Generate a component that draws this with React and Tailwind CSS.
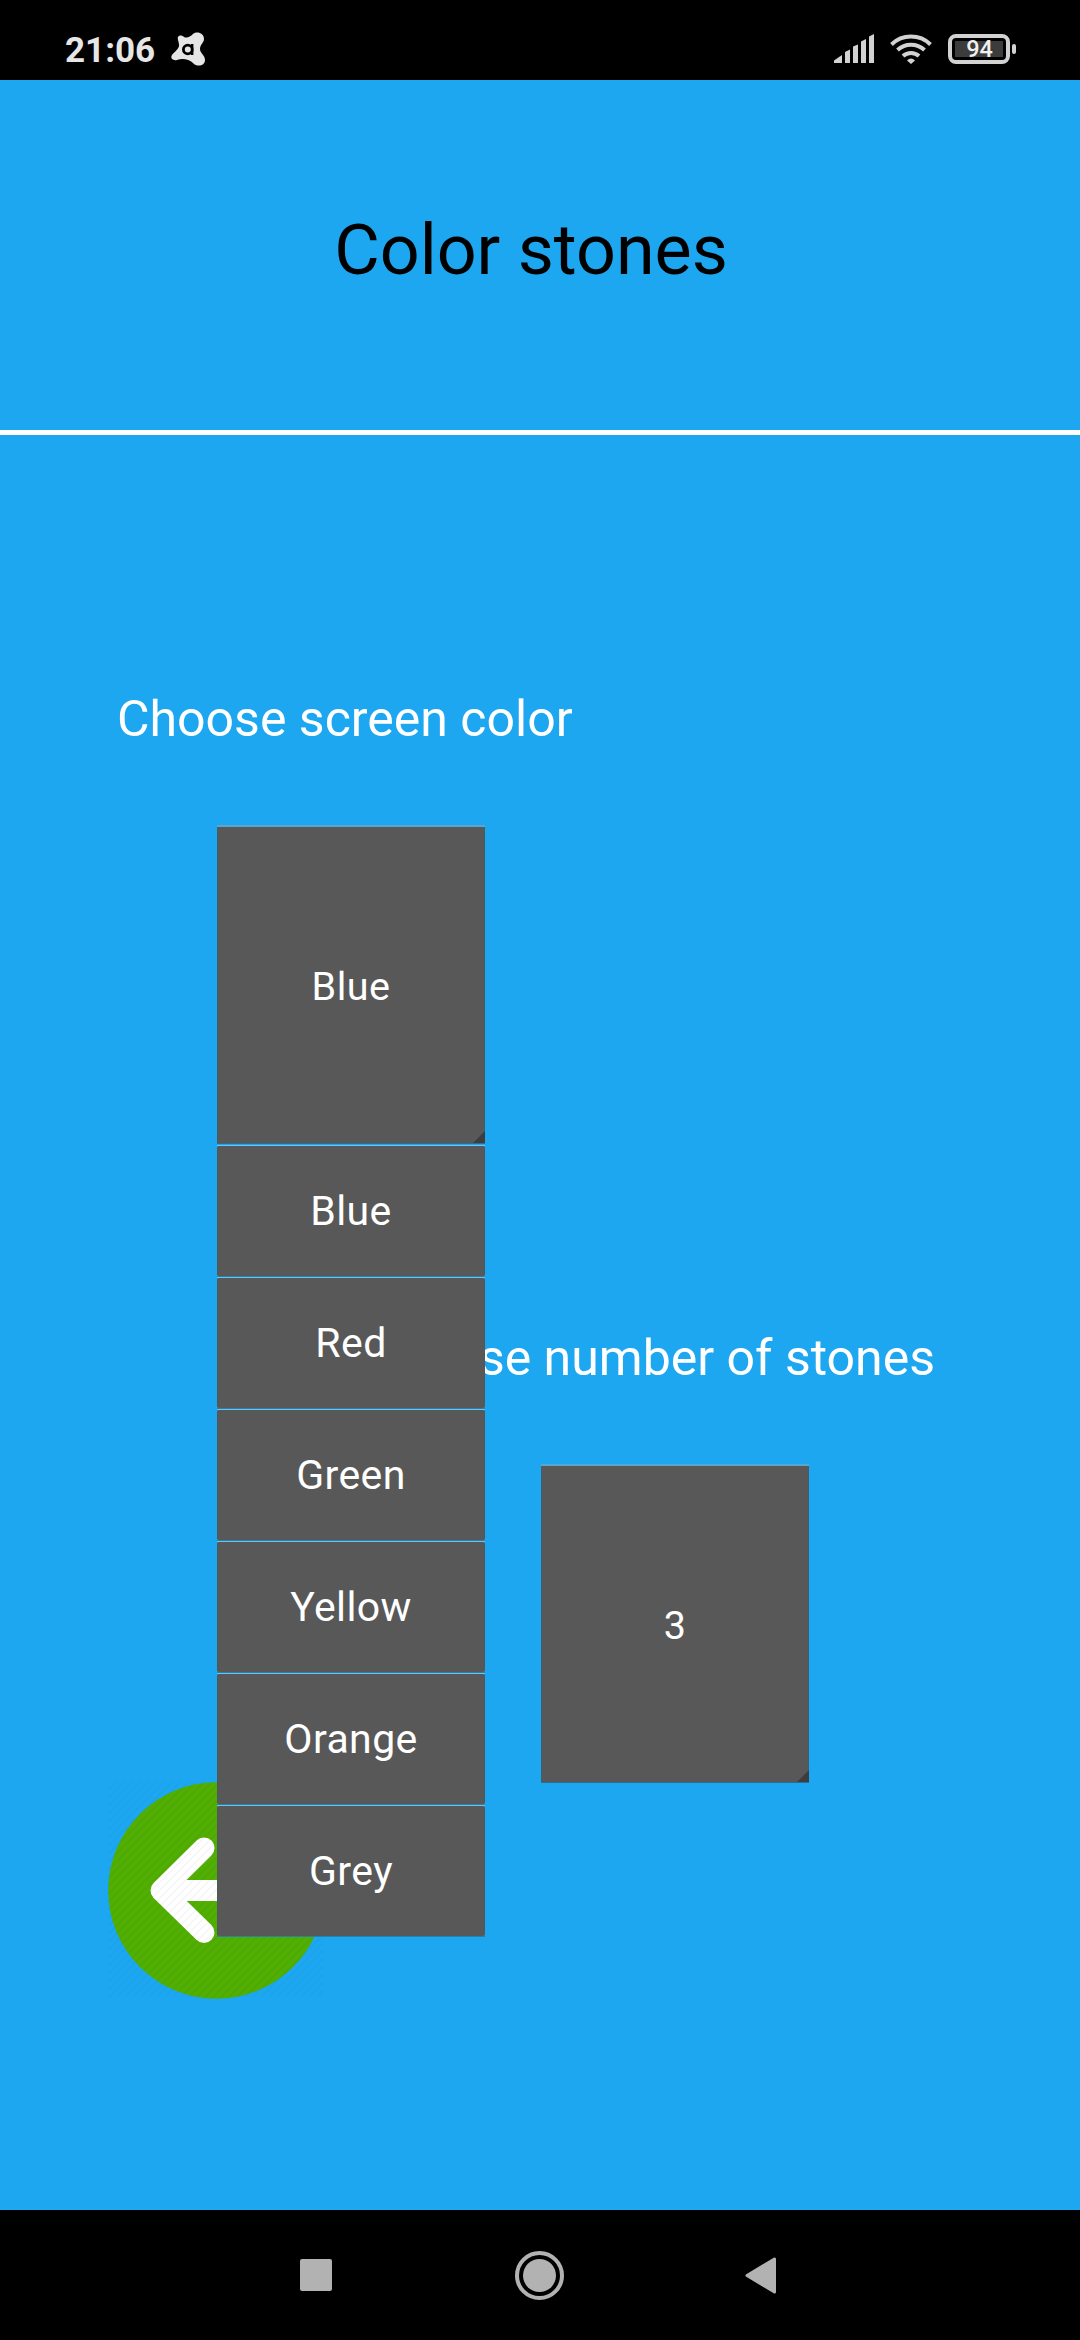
import React from "react";

const options = ["Blue", "Red", "Green", "Yellow", "Orange", "Grey"];

function Option({ label }) {
  return (
    <li className="flex h-[132px] flex-col">
      <div className="h-px bg-[#6fc3ee]" />
      <div className="flex flex-1 items-center justify-center rounded-xs border-x border-[#50575b] bg-[#585858] pt-[2px] text-[41px] tracking-[0.4px] text-white">
        <span>{label}</span>
      </div>
      <div className="h-px bg-[#2a7fad]" />
    </li>
  );
}

function Spinner({ value, children }) {
  return (
    <div className="relative h-[319px] w-[268px]">
      <div className="flex h-full flex-col">
        <div className="h-[2px] bg-[#5aa5cf]" />
        <div className="flex flex-1 items-center justify-center border-x border-[#3f5f70] bg-[#585858] pt-[3px] text-[39.5px] tracking-[0.5px] text-white">
          <span>{value}</span>
        </div>
        <div className="h-px bg-[#2a6f93]" />
      </div>
      <svg className="absolute right-0 bottom-px" width="12" height="12" viewBox="0 0 12 12">
        <path d="M12 0V12H0Z" fill="#3d3d3d" />
      </svg>
      {children}
    </div>
  );
}

function StatusBar() {
  return (
    <header className="flex h-20 items-center bg-black pr-[64px] pl-[65px]">
      <span className="mt-[20px] text-[35px] leading-none font-bold text-[#e6e6e6]">21:06</span>
      <svg className="mt-[18px] ml-[16px]" width="34" height="34" viewBox="0 0 34 34">
        <path
          d="M7 5C8 3 11 3 13 5C16 6.500 19 5 22 2C26 -1 33 1 33 7C33 11 29 12 29 17C29 21 34 23 34 28C34 34 26 35.500 22 31C18 27 11 26 6 28C1.500 29 -1 26 1 23C3 20 7 18 8 14C8.500 11 6 7 7 5Z"
          fill="#e6e6e6"
        />
        <circle cx="16.800" cy="17.500" r="4.400" fill="none" stroke="#000" strokeWidth="2.800" />
        <path d="M21.200 12V23" stroke="#000" strokeWidth="2.400" />
      </svg>
      <div className="mt-[18px] ml-auto flex items-center">
        <svg width="41" height="30" viewBox="0 0 41 30" fill="#d2d2d2">
          <path d="M0 29V26.500L8 21V29Z" />
          <path d="M11 29V18L16 15.500V29Z" />
          <path d="M19 29V12.500L24 10.500V29Z" />
          <path d="M27 29V7.500L32 5V29Z" />
          <path d="M35 29V2.500L40 0V29Z" />
        </svg>
        <svg className="ml-[15px]" width="42" height="30" viewBox="0 0 42 30" fill="none" stroke="#d2d2d2" strokeWidth="4">
          <path d="M1.500 10.500A28 28 0 0 1 40.500 10.500" />
          <path d="M7.500 16A20 20 0 0 1 34.500 16" />
          <path d="M13 22A12 12 0 0 1 29 22" />
          <path d="M17 26.500Q21 22.500 25 26.500L21 30Z" fill="#d2d2d2" stroke="none" />
        </svg>
        <div className="ml-[16px] flex h-[30px] w-[62px] items-center justify-center rounded-[8px] border-4 border-[#d2d2d2] p-[3px]">
          <div className="flex h-full w-full items-center justify-center bg-[#3c3c3c] pt-[2px] pl-[1px] text-[23.5px] leading-none font-medium text-[#f0f0f0]">94</div>
        </div>
        <div className="ml-[2px] h-[10px] w-[4px] rounded-[2px] bg-[#d2d2d2]" />
      </div>
    </header>
  );
}

function BackButton() {
  return (
    <svg width="217" height="217" viewBox="0 0 217 217">
      <defs>
        <pattern id="stripes" width="8" height="8" patternUnits="userSpaceOnUse">
          <path d="M-1 1L1 -1M0 8L8 0M7 9L9 7" stroke="#000" strokeOpacity="0.045" strokeWidth="1.2" />
        </pattern>
      </defs>
      <rect width="215" height="215" fill="url(#stripes)" opacity="0.6" />
      <circle cx="108.500" cy="108.500" r="108.300" fill="#51ae02" />
      <path
        d="M96 66L53 108.500L96 150.500M60 108.500H165"
        fill="none"
        stroke="#fff"
        strokeWidth="21"
        strokeLinejoin="round"
        strokeLinecap="round"
      />
      <circle cx="108.500" cy="108.500" r="108" fill="url(#stripes)" />
    </svg>
  );
}

function NavBar() {
  return (
    <nav className="flex h-[130px] items-center bg-black pl-[300px]">
      <div className="h-[32px] w-[32px] rounded-[2px] bg-[#b2b2b2]" />
      <svg className="ml-[183px]" width="49" height="49" viewBox="0 0 49 49">
        <circle cx="24.500" cy="24.500" r="22.500" fill="none" stroke="#b2b2b2" strokeWidth="4" />
        <circle cx="24.500" cy="24.500" r="16.500" fill="#b2b2b2" />
      </svg>
      <svg className="ml-[181px] shrink-0" width="31" height="37" viewBox="0 0 31 37">
        <path d="M2 18.500L29.500 2V35Z" fill="#b2b2b2" stroke="#b2b2b2" strokeWidth="3" strokeLinejoin="round" />
      </svg>
    </nav>
  );
}

export default function App() {
  return (
    <div className="flex h-[2340px] w-[1080px] flex-col overflow-hidden bg-[#1ca7f0] font-['Roboto',sans-serif]">
      <StatusBar />
      <div className="flex h-[355px] justify-center border-b-[5px] border-white pt-[129px] pr-[18px]">
        <h1 className="text-[70px] leading-[82px] text-black">Color stones</h1>
      </div>
      <main className="flex h-[1775px] flex-col">
        <p className="mt-[255px] ml-[117px] text-[50px] leading-[58px] text-white">Choose screen color</p>
        <div className="mt-[77px] ml-[217px]">
          <Spinner value="Blue">
            <ul className="absolute top-[320px] left-0 z-10 w-[268px]">
              {options.map((o) => (
                <Option key={o} label={o} />
              ))}
            </ul>
          </Spinner>
        </div>
        <p className="mt-[185px] mr-[145px] self-end text-[50px] leading-[58px] text-white">Choose number of stones</p>
        <div className="mt-[77px] ml-[541px]">
          <Spinner value="3" />
        </div>
        <div className="-mt-px ml-[108px]">
          <BackButton />
        </div>
      </main>
      <NavBar />
    </div>
  );
}
